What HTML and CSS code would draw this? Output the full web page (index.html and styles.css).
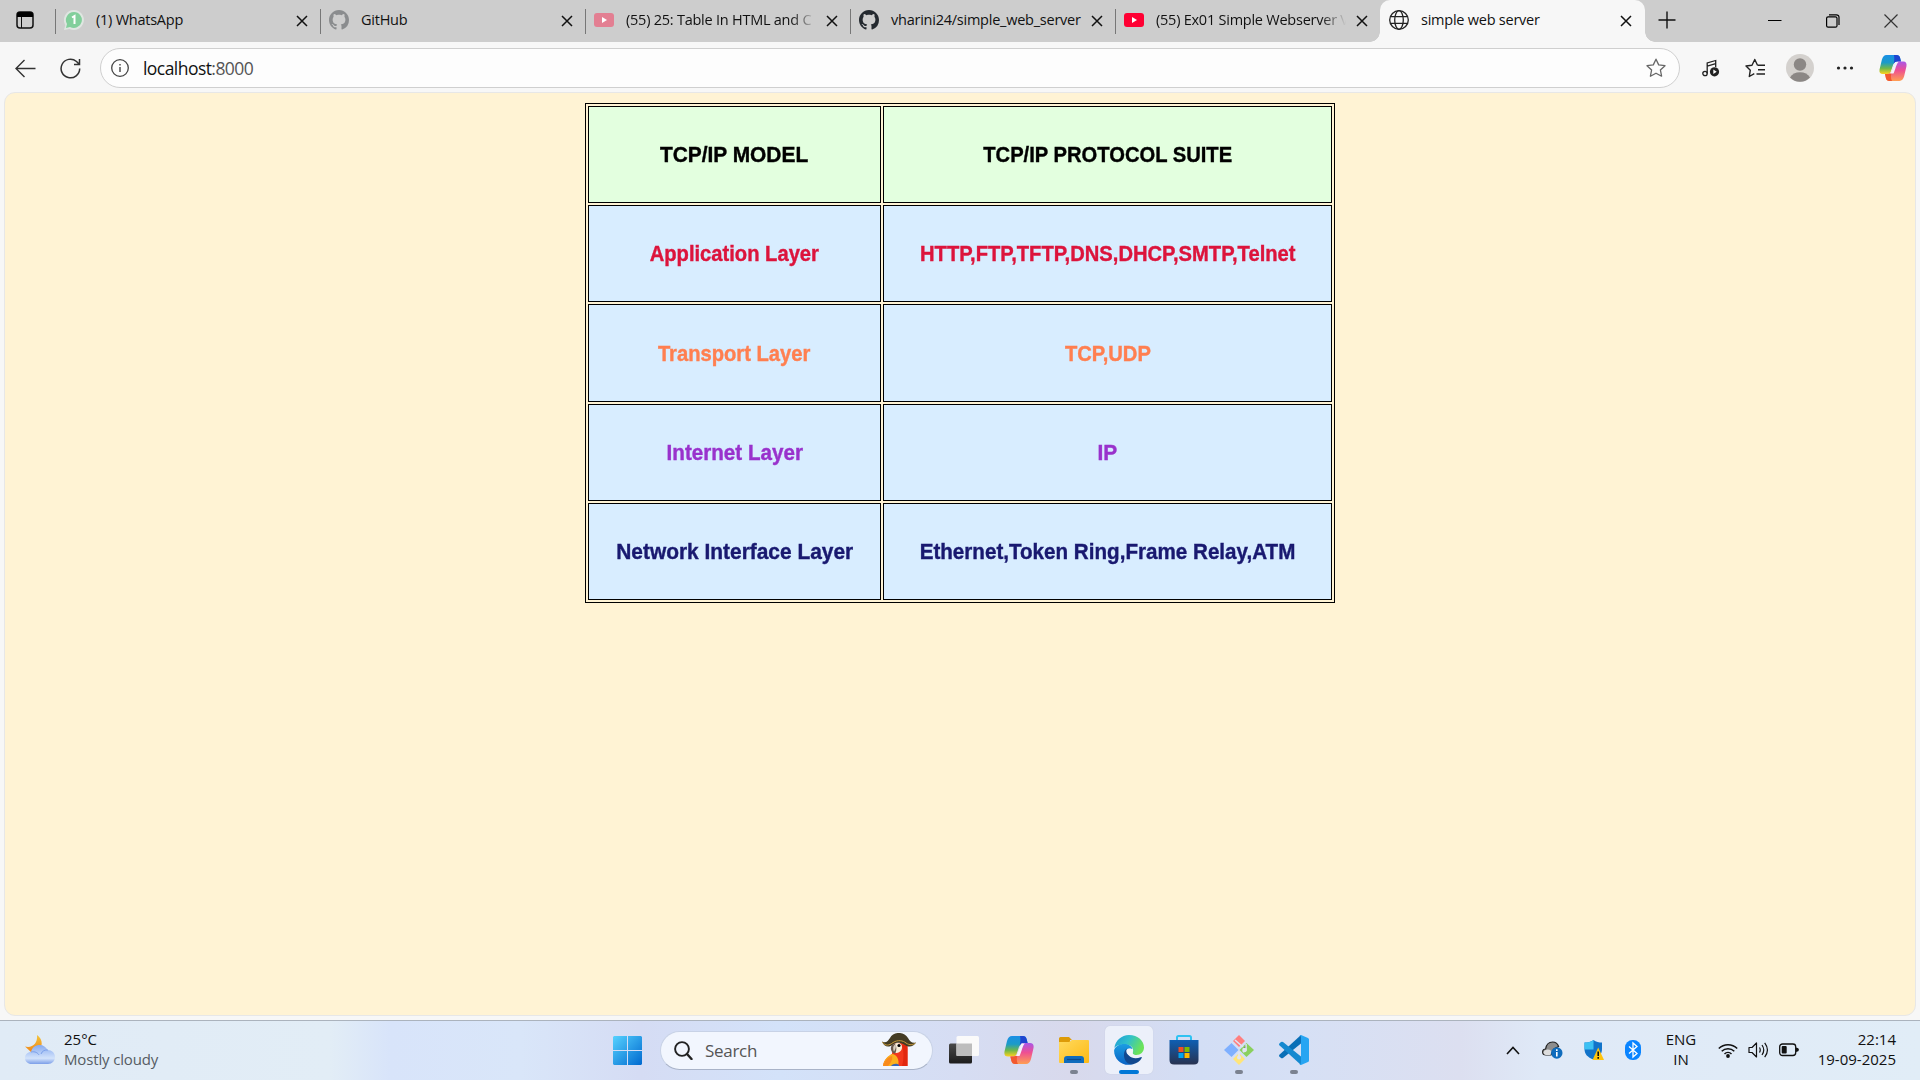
FILE: index.html
```html
<!DOCTYPE html>
<html lang="en">
<head>
<meta charset="utf-8">
<title>simple web server</title>
<link rel="stylesheet" href="styles.css">
</head>
<body>
<svg class="defs" width="0" height="0">
  <defs>
    <linearGradient id="cpA" x1="0" y1="0" x2="0" y2="1"><stop offset="0" stop-color="#1a8fe6"/><stop offset=".4" stop-color="#1b9bc8"/><stop offset=".7" stop-color="#6fb84a"/><stop offset="1" stop-color="#ffd21c"/></linearGradient>
    <linearGradient id="cpB" x1="0" y1="0" x2="0" y2="1"><stop offset="0" stop-color="#a957e8"/><stop offset=".45" stop-color="#ee4f93"/><stop offset="1" stop-color="#ff9f52"/></linearGradient>
    <linearGradient id="win" x1="0" y1="0" x2="1" y2="1"><stop offset="0" stop-color="#56d2ff"/><stop offset="1" stop-color="#0069cf"/></linearGradient>
    <linearGradient id="fold" x1="0" y1="0" x2="1" y2="1"><stop offset="0" stop-color="#ffda5e"/><stop offset="1" stop-color="#fdb913"/></linearGradient>
    <linearGradient id="edA" x1="0" y1="0" x2="1" y2=".4"><stop offset="0" stop-color="#1c9ad8"/><stop offset=".5" stop-color="#30c0cb"/><stop offset="1" stop-color="#6be35a"/></linearGradient>
    <linearGradient id="edB" x1="0" y1="0" x2="0" y2="1"><stop offset="0" stop-color="#1b9de2"/><stop offset="1" stop-color="#0a62c4"/></linearGradient>
    <linearGradient id="store" x1="0" y1="0" x2="0" y2="1"><stop offset="0" stop-color="#0f5fb3"/><stop offset="1" stop-color="#283250"/></linearGradient>
    <linearGradient id="cloud" x1="0" y1="0" x2="0" y2="1"><stop offset="0" stop-color="#86aaf0"/><stop offset=".7" stop-color="#d3e3fb"/><stop offset="1" stop-color="#7b9ee8"/></linearGradient>
    <linearGradient id="moon" x1="0" y1="0" x2="0" y2="1"><stop offset="0" stop-color="#f2c53b"/><stop offset="1" stop-color="#f0861a"/></linearGradient>
    <linearGradient id="tvA" x1="0" y1="0" x2="0" y2="1"><stop offset="0" stop-color="#4a4a4a"/><stop offset="1" stop-color="#1c1c1c"/></linearGradient>
    <symbol id="x" viewBox="0 0 12 12"><path d="M1 1l10 10M11 1L1 11" fill="none" stroke="#111" stroke-width="1.5"/></symbol>
    <symbol id="gh" viewBox="0 0 16 16"><path d="M8 0C3.58 0 0 3.58 0 8c0 3.54 2.29 6.53 5.47 7.59.4.07.55-.17.55-.38 0-.19-.01-.82-.01-1.49-2.01.37-2.53-.49-2.69-.94-.09-.23-.48-.94-.82-1.13-.28-.15-.68-.52-.01-.53.63-.01 1.08.58 1.23.82.72 1.21 1.87.87 2.33.66.07-.52.28-.87.51-1.07-1.78-.2-3.64-.89-3.64-3.95 0-.87.31-1.59.82-2.15-.08-.2-.36-1.02.08-2.12 0 0 .67-.21 2.2.82.64-.18 1.32-.27 2-.27s1.36.09 2 .27c1.53-1.04 2.2-.82 2.2-.82.44 1.1.16 1.92.08 2.12.51.56.82 1.27.82 2.15 0 3.07-1.87 3.75-3.65 3.95.29.25.54.73.54 1.48 0 1.07-.01 1.93-.01 2.2 0 .21.15.46.55.38A8.01 8.01 0 0 0 16 8c0-4.42-3.58-8-8-8z"/></symbol>
    <symbol id="yt" viewBox="0 0 20 20"><rect y="3" width="20" height="14" rx="3" fill="currentColor"/><path d="M8 7v6l5-3z" fill="#fff"/></symbol>
    <symbol id="copilot" viewBox="0 0 30 28">
      <path d="M8 0h11c2 0 3 1 3.600 3l1 4h-4c-3 0-4 2-5 5l-2 6c-1 2-2 2.500-4 2.500H4C1 20.500 0 18.500.5 15.500L3 5C4 1.800 5.500 0 8 0z" fill="url(#cpA)"/>
      <path d="M16 0h3c2 0 3 1 3.600 3l1 4h-4c-2 0-3 1-4 3 1-4 1-8 .4-10z" fill="#1f45d0"/>
      <path d="M22 28H11c-2 0-3-1-3.600-3l-1-4.500h3c3 0 4-2 5-5l2.500-6C18 7.500 19 7 21 7h5c3 0 4 2 3.500 5L27 23c-1 3.200-2.500 5-5 5z" fill="url(#cpB)"/>
      <path d="M14 28h-3c-2 0-3-1-3.600-3l-1-4.500h3c2 0 3-1 4.500-3-1.500 4-1.500 8 .1 10.500z" fill="#f2592f"/>
      <path d="M17.500 7.500h3.500c-2.500 1.500-3.500 9-5.500 12.500h-4c2-1 4-9 6-12.500z" fill="#f4f2fb"/>
    </symbol>
  </defs>
</svg>

<header class="tabs">
  <div class="tab-actions"><svg width="18" height="18" viewBox="0 0 18 18"><rect x="1" y="1" width="16" height="16" rx="3" fill="none" stroke="#111" stroke-width="1.500"/><path d="M1 6V4a3 3 0 0 1 3-3h10a3 3 0 0 1 3 3v2z" fill="#000"/><path d="M5.500 6v11" stroke="#111"/></svg></div>
  <div class="tab">
    <svg class="fav" viewBox="0 0 20 20"><path d="M10 0a10 10 0 1 1-4.500 19L0 20l1.300-5A10 10 0 0 1 10 0z" fill="#dfe6e1"/><path d="M10 2a8 8 0 1 1-4 15l-4 1 1-4a8 8 0 0 1 7-12z" fill="#82cf9b"/><path d="M8 7.500L10.500 6v8" fill="none" stroke="#fff" stroke-width="2"/></svg>
    <span class="title">(1) WhatsApp</span><svg class="close"><use href="#x"/></svg>
  </div>
  <div class="tab"><svg class="fav dim"><use href="#gh"/></svg><span class="title">GitHub</span><svg class="close"><use href="#x"/></svg></div>
  <div class="tab"><svg class="fav yt-dim"><use href="#yt"/></svg><span class="title fade">(55) 25: Table In HTML and C</span><svg class="close"><use href="#x"/></svg></div>
  <div class="tab"><svg class="fav ink"><use href="#gh"/></svg><span class="title">vharini24/simple_web_server</span><svg class="close"><use href="#x"/></svg></div>
  <div class="tab"><svg class="fav yt"><use href="#yt"/></svg><span class="title fade">(55) Ex01 Simple Webserver V</span><svg class="close"><use href="#x"/></svg></div>
  <div class="tab active"><svg class="fav" viewBox="0 0 20 20"><g fill="none" stroke="#222" stroke-width="1.300"><circle cx="10" cy="10" r="9.300"/><ellipse cx="10" cy="10" rx="4.300" ry="9.300"/><path d="M1.500 6.700h17M1.500 13.300h17"/></g></svg><span class="title">simple web server</span><svg class="close"><use href="#x"/></svg></div>
  <svg class="plus" width="18" height="18" viewBox="0 0 18 18"><path d="M9 .5v17M.5 9h17" stroke="#111" stroke-width="1.400"/></svg>
  <div class="winctl">
    <svg width="14" height="14"><path d="M0 6.500h13.500" stroke="#000"/></svg>
    <svg width="14" height="14"><g fill="none" stroke="#000" stroke-width="1.200"><rect x=".6" y="2.800" width="10.400" height="10.400" rx="1.500"/><path d="M3 .8h7.500a2.500 2.500 0 0 1 2.500 2.500V11"/></g></svg>
    <svg width="14" height="14"><path d="M.5.5l13 13M13.500.5l-13 13" stroke="#333" stroke-width="1.200"/></svg>
  </div>
</header>

<nav class="toolbar">
  <svg class="back" width="21" height="19" viewBox="0 0 21 19"><path d="M20.500 9.500H1M9.500 1L1 9.500 9.500 18" fill="none" stroke="#333" stroke-width="1.400"/></svg>
  <svg class="reload" width="21" height="21" viewBox="0 0 21 21"><path d="M19.700 10.500A9.300 9.300 0 1 1 16.500 3.500l2.800 2.700M19.500 1v5.500H14" fill="none" stroke="#333" stroke-width="1.500"/></svg>
  <div class="address">
    <svg width="18" height="18" viewBox="0 0 18 18"><circle cx="9" cy="9" r="8.300" fill="none" stroke="#444" stroke-width="1.300"/><path d="M9 8v5M9 5v1.500" stroke="#444" stroke-width="1.400"/></svg>
    <span class="url">localhost<span class="port">:8000</span></span>
    <svg class="star" width="20" height="20" viewBox="0 0 20 20"><path d="M10 1.200l2.700 5.700 6.300.8-4.600 4.300 1.200 6.200L10 15.200l-5.600 3 1.200-6.200L1 7.700l6.300-.8z" fill="none" stroke="#666" stroke-width="1.300" stroke-linejoin="round"/></svg>
  </div>
  <div class="tools">
    <svg class="media" width="18" height="19" viewBox="0 0 18 19"><g fill="none" stroke="#222" stroke-width="1.300"><circle cx="3" cy="14.500" r="2.200"/><path d="M5.200 14.500V4l8.500-2.500V8M5.200 7.200l8.500-2.500"/></g><circle cx="12.500" cy="12.800" r="4.600" fill="#222"/><path d="M11.300 10.600v4.400l3.400-2.200z" fill="#fff"/></svg>
    <svg class="favorites" width="21" height="20" viewBox="0 0 21 20"><path d="M12.500 7.200L9.800 1.500 7 7.200l-6 .8 4.300 4.200-1 6.300 5-2.800M12.500 7.200H20M13 11.800h7M11.500 16h8.500" fill="none" stroke="#222" stroke-width="1.400" stroke-linejoin="round"/></svg>
    <svg class="avatar" width="28" height="28" viewBox="0 0 28 28"><circle cx="14" cy="14" r="14" fill="#d4d1ce"/><circle cx="14" cy="10.500" r="6.200" fill="#8b8785"/><path d="M4 23.500C6 20 9.500 18.200 14 18.200s8 1.800 10 5.300a14 14 0 0 1-20 0z" fill="#8b8785"/></svg>
    <svg class="more" width="18" height="4" viewBox="0 0 18 4"><g fill="#222"><circle cx="2.500" cy="2" r="1.600"/><circle cx="9" cy="2" r="1.600"/><circle cx="15.500" cy="2" r="1.600"/></g></svg>
    <svg width="28" height="26"><use href="#copilot"/></svg>
  </div>
</nav>

<div class="frame">
<main class="page">
  <table>
    <tr><th><span class="wider">TCP/IP MODEL</span></th><th><span>TCP/IP PROTOCOL SUITE</span></th></tr>
    <tr class="application"><td><span>Application Layer</span></td><td><span>HTTP,FTP,TFTP,DNS,DHCP,SMTP,Telnet</span></td></tr>
    <tr class="transport"><td><span>Transport Layer</span></td><td><span>TCP,UDP</span></td></tr>
    <tr class="internet"><td><span class="wide">Internet Layer</span></td><td><span class="wider">IP</span></td></tr>
    <tr class="network"><td><span class="wider">Network Interface Layer</span></td><td><span class="wide">Ethernet,Token Ring,Frame Relay,ATM</span></td></tr>
  </table>
</main>
</div>

<footer class="taskbar">
  <div class="weather">
    <svg width="30" height="30" viewBox="0 0 30 30"><path d="M12 0c6 4 7 13-1 17H6L0 11.500c7 2 13-3 12-11.500z" fill="url(#moon)"/><path d="M6.500 29C3 29 0 26.500 0 23s2.500-6 6-6c1-4.500 4.500-7 8.500-7 4 0 6.500 2 8 5 4.500 0 7.500 3 7.500 7s-3 7-7 7z" fill="url(#cloud)"/><path d="M6 17c4-1 7 1 8 3M16 19c1-3 4-4.500 7-4" stroke="#7ba0ea" stroke-width="1" fill="none"/></svg>
    <div class="lines"><span>25°C</span><span class="grey">Mostly cloudy</span></div>
  </div>
  <div class="apps">
    <svg class="start" width="29" height="29" viewBox="0 0 29 29"><path d="M1 0h13v14H0V1zM15 0h13l1 1v13H15zM0 15h14v14H1l-1-1zM15 15h14v13l-1 1H15z" fill="url(#win)"/></svg>
    <div class="search">
      <svg width="19" height="19" viewBox="0 0 19 19"><circle cx="8" cy="8" r="6.900" fill="none" stroke="#222" stroke-width="1.900"/><path d="M13 13l4.500 5" stroke="#222" stroke-width="2.400" stroke-linecap="round"/></svg>
      <span>Search</span>
      <svg class="parrot" width="34" height="34" viewBox="0 0 34 34"><path d="M11 10h11c3 0 3.500 3 3.500 6v17H1c1-7 5-9 9-12z" fill="#f2381c"/><path d="M1 33c1-7 5-10 9-12 4 0 8 5 6 12z" fill="#fbb01d"/><path d="M1 33c2-6 5-9 9-10 1 3-1 7-4 10z" fill="#f98a1c"/><path d="M9 33c2-2.500 6-3 8-1v1z" fill="#3766b5"/><path d="M20 12l5.500-1v22H20c2-7 2-14 0-21z" fill="#e2280f"/><path d="M11 11c5-2 9-1 9 3s-3 6-7 6z" fill="#f9efda"/><path d="M13 11c-4 0-5 4-3.500 7 1 2 2.500 3 4 2 1-3 1.500-6-.5-9z" fill="#6b5a4c"/><path d="M13.500 11.500c-2.500 1-3 4-1.500 7 1.500-2 2.500-5 1.500-7z" fill="#d9cfc0"/><circle cx="17" cy="12.500" r="1.600" fill="#000"/><path d="M0 8.500c4 2 6-.5 8-3.500 3-6.500 14-7 18 0 2 3.500 4 5.500 8 4.500-3 5-8 5-12 2-4-2.500-8-2.500-11 0C7 15 2 14 0 8.500z" fill="#443c24"/><path d="M.5 9c3 4.500 6.500 3.500 10.500.5 5-3 10-2 13 .5 4 2.500 6.500 2 9.500 0" stroke="#c79a3a" stroke-width="1" fill="none"/></svg>
    </div>
    <div class="app"><svg width="30" height="28" viewBox="0 0 30 28"><rect y="7.500" width="23" height="20" rx="1.500" fill="url(#tvA)"/><rect x="7.500" width="22.500" height="20" rx="1.500" fill="#fafafa"/><rect x="7.500" y="7.500" width="15.500" height="12.500" fill="#bdbdbd"/></svg></div>
    <div class="app"><svg width="30" height="28"><use href="#copilot"/></svg></div>
    <div class="app run"><svg width="30" height="26" viewBox="0 0 30 26"><path d="M0 1.500Q0 0 1.500 0H10l3 3h-2v5H0z" fill="#dd9b08"/><path d="M0 5h10l3-2h16q1 0 1 1v21q0 1-1 1H1q-1 0-1-1z" fill="url(#fold)"/><path d="M5 26v-4q0-3 3-3h14q3 0 3 3v4z" fill="#0f6cbd"/><path d="M8 22.500h14" stroke="#0a4a8c" stroke-width="1.200"/></svg></div>
    <div class="app current"><svg width="30" height="30" viewBox="0 0 30 30"><path d="M.3 13C1.500 5.500 7.500 0 15 0c9 0 15 6 15 12.500 0 4.500-3.500 7.500-7.500 7.500-3.500 0-4.500-1-3.500-3 1-4-2-7.500-8-7.500C6 9.500 2 10.500.3 13z" fill="url(#edA)"/><path d="M.1 15.500C1 11.500 5 9 10.500 9c3.500 0 7 1.500 8 5-5-1.500-8.500 2.500-7.500 7.500.8 4 4 7.200 8 7.700C9 32 0 25 .1 15.500z" fill="url(#edB)"/><path d="M12.700 13.500C7.500 18 10 30 19 29.200c4-.7 7-3.200 8.700-6.200.3-.8-.3-1.200-1-.8C19 25.500 12 21 12.700 13.500z" fill="#11488f"/><path d="M12.500 15c1.500-2 5-2 6 .2.600 1.500-.7 2 .3 3.600.6 1 1.600 1.200 3.200 1.200-5 2-10.500 0-9.500-5z" fill="#f0f4fb"/></svg></div>
    <div class="app"><svg width="30" height="30" viewBox="0 0 30 30"><path d="M8 6V2.500Q8 1 9.500 1h11Q22 1 22 2.500V6" fill="none" stroke="#2fc2f2" stroke-width="2"/><path d="M.5 5h29v20q0 4.500-4.500 4.500H5Q.5 29.500.5 25z" fill="url(#store)"/><path d="M9.500 12h5v5h-5z" fill="#f25022"/><path d="M15.500 12h5v5h-5z" fill="#7fba00"/><path d="M9.500 18h5v5h-5z" fill="#00a4ef"/><path d="M15.500 18h5v5h-5z" fill="#ffb900"/></svg></div>
    <div class="app run"><svg width="30" height="30" viewBox="0 0 30 30"><path d="M15 0l6 6-6 6-6-6z" fill="#ff7f7f"/><path d="M7.500 8l7 7-7 7L0 15z" fill="#7fb0ff"/><path d="M22.500 8l7.500 7-7.500 7-7-7z" fill="#8ad05e"/><path d="M15 18l6 6-6 6-6-6z" fill="#ffe57a"/><path d="M11 5l8 7M22 9v6l-3 2M15 17v6" stroke="#dfe4f5" stroke-width="1.600"/><circle cx="20.500" cy="15" r="2.300" fill="#dfe4f5"/><circle cx="15" cy="22.500" r="2" fill="#dfe4f5"/></svg></div>
    <div class="app run"><svg width="30" height="30" viewBox="0 0 30 30"><path d="M22 0v8.500L4 23q-1 .6-2 0L.4 21.500q-.7-1 0-1.800z" fill="#0a6fb7"/><path d="M22 30v-8.500L4 7q-1-.6-2 0L.4 8.500q-.7 1 0 1.800z" fill="#1489d0"/><path d="M22 0l7 3q1 .5 1 1.500v21q0 1-1 1.500l-7 3q-1 0-1.500-.5 1.500 0 1.500-2V2.500q0-2-1.500-2Q21 0 22 0z" fill="#27a5f2"/></svg></div>
  </div>
  <div class="tray">
    <svg class="chev" width="14" height="9"><path d="M1 8l6-6.500L13 8" fill="none" stroke="#111" stroke-width="1.600"/></svg>
    <svg class="onedrive" width="21" height="18" viewBox="0 0 21 18"><path d="M4 14C1.500 14 .6 12.500.6 11c0-2 1.400-3 3-3 .6-4 3-7 7-7 3 0 5 1.500 6 4.500L12 8l-3 6z" fill="#8d8d8d" stroke="#222" stroke-width="1.200"/><path d="M1.500 11c2-3 5-3 8-1l-1 4H4c-1.500 0-2.500-1-2.500-3z" fill="#ddd"/><circle cx="14.800" cy="12" r="5.700" fill="#0f6cbd"/><path d="M14.800 11v4.500M14.800 8.300v1.600" stroke="#fff" stroke-width="1.600"/></svg>
    <svg class="shield" width="20" height="21" viewBox="0 0 20 21"><path d="M9.500 0C12 2 15 2.500 18 2.500V9c0 5-3 8.500-8.500 10.500C3.500 17.500.5 14 .5 9V2.500C4 2.500 7 2 9.500 0z" fill="#1273c9"/><path d="M9.500 0v9.500h-9v-7C4 2.500 7 2 9.500 0z" fill="#3cc1f3"/><path d="M14.200 7.500L20 20H8.500z" fill="#ffc40d"/><path d="M14.200 11.500v4.500M14.200 17v1.700" stroke="#111" stroke-width="1.600"/></svg>
    <svg class="bt" width="16" height="20" viewBox="0 0 16 20"><rect width="16" height="20" rx="7.500" fill="#0a84ff"/><path d="M4 6.500l8 7L8 17V3l4 3.500-8 7" fill="none" stroke="#fff" stroke-width="1.300"/></svg>
    <div class="lines lang"><span>ENG</span><span>IN</span></div>
    <div class="status">
      <svg width="20" height="16" viewBox="0 0 20 16"><g fill="none" stroke="#111" stroke-width="1.500"><path d="M.8 6.500a13 13 0 0 1 18.400 0M3.700 9.300a9 9 0 0 1 12.600 0M6.500 12a5 5 0 0 1 7 0"/></g><circle cx="10" cy="14" r="1.900" fill="#111"/></svg>
      <svg width="21" height="18" viewBox="0 0 21 18"><g fill="none" stroke="#111" stroke-width="1.200"><path d="M1 6.500h3l4.500-4.500v14L4 11.500H1z" stroke-linejoin="round"/><path d="M11.500 6.500q1.500 2.500 0 5M14 4q3.500 5 0 10M16.700 1.800q5.500 7.200 0 14.400"/></g></svg>
      <svg width="20" height="14" viewBox="0 0 20 14"><rect x=".7" y="1" width="16" height="11.500" rx="2.800" fill="none" stroke="#111" stroke-width="1.300"/><rect x="2.700" y="3" width="5" height="7.500" rx="1" fill="#111"/><path d="M17 4.500q3 .5 3 2.300T17 9z" fill="#111"/></svg>
    </div>
    <div class="lines clock"><span>22:14</span><span>19-09-2025</span></div>
  </div>
</footer>
</body>
</html>
```
FILE: styles.css
```css
* { box-sizing: border-box; }
body { margin: 0; width: 1920px; height: 1080px; overflow: hidden; display: flex; flex-direction: column; background: #f7f7f7; font-family: "Open Sans", "Noto Sans", sans-serif; color: #111; }
svg { display: block; flex: none; }
.defs { position: absolute; }

/* Tab strip */
.tabs { height: 42px; flex: none; display: flex; background: #cdcdcd; }
.tab-actions { width: 55px; padding: 11px 0 0 16px; }
.tab { width: 265px; height: 42px; display: flex; align-items: center; padding: 0 12px 3px 9px; position: relative; }
.tab::before { content: ""; position: absolute; left: 0; top: 9px; width: 1px; height: 25px; background: #777; }
.tab .fav { width: 20px; height: 20px; margin-right: 12px; }
.tab .title { flex: none; width: 192px; font-size: 14.5px; letter-spacing: -.24px; white-space: nowrap; }
.tab .fade { -webkit-mask-image: linear-gradient(90deg, #000 165px, transparent 190px); mask-image: linear-gradient(90deg, #000 165px, transparent 190px); }
.tab .close { width: 12px; height: 12px; margin-left: 8px; margin-top: 3px; }
.dim { fill: #8a8c8e; }
.ink { fill: #24292f; }
.yt { color: #ff0033; }
.yt-dim { color: #e37f92; }
.tab.active { background: #f7f7f7; border-radius: 10px 10px 0 0; }
.tab.active .close { margin-left: 7px; }
.tab.active::before { left: -10px; top: 32px; width: 10px; height: 10px; background: radial-gradient(circle at 0 0, transparent 9.500px, #f7f7f7 10px); }
.tab.active::after { content: ""; position: absolute; right: -10px; top: 32px; width: 10px; height: 10px; background: radial-gradient(circle at 100% 0, transparent 9.500px, #f7f7f7 10px); }
.plus { margin: 11px 0 0 13px; }
.winctl { display: flex; gap: 44px; margin-left: auto; padding: 14px 22px 0 0; }

/* Address row */
.toolbar { height: 50px; flex: none; display: flex; align-items: center; padding: 2px 13px 0 15px; }
.back { margin-right: 24px; }
.reload { margin-right: 19px; }
.address { width: 1580px; height: 40px; display: flex; align-items: center; padding: 0 13px 0 10px; background: #fdfdfd; border: 1px solid #cfcfcf; border-radius: 20px; }
.url { margin-left: 14px; font-size: 17.500px; letter-spacing: -.55px; }
.port { color: #555; }
.star { margin-left: auto; }
.tools { flex: 1; display: flex; align-items: center; padding-left: 22px; }
.media { margin-right: 25px; }
.favorites { margin-right: 20px; }
.avatar { margin-right: 22px; }
.more { margin-right: 25px; }

/* Page */
.frame { flex: none; height: 929px; padding: 0 4px 4px; border-bottom: 1px solid #abb3bd; }
.page { height: 924px; background: #fff3d4; border: 1px solid #e7e7e7; border-radius: 11px; padding-top: 10px; }
table { width: 750px; height: 500px; margin: 0 auto; border: 1px solid #000; border-spacing: 2px; table-layout: fixed; font: bold 22px "Liberation Sans", Arial, sans-serif; text-align: center; color: #000; }
th, td { border: 1px solid #000; padding: 1px 0 0; height: 97px; background: #d8edff; white-space: nowrap; }
th { background: #e3ffdf; }
th:first-child, td:first-child { width: 293px; }
.transport td { height: 98px; }
table span { display: inline-block; transform: scaleX(.917); -webkit-text-stroke: .4px currentColor; }
table .wide { transform: scaleX(.937); }
table .wider { transform: scaleX(.95); }
.application { color: crimson; }
.transport { color: coral; }
.internet { color: darkorchid; }
.network { color: midnightblue; }

/* Taskbar */
.taskbar { flex: 1; display: flex; align-items: center; padding-bottom: 1px; background: linear-gradient(90deg, #e0ebf6 0, #e2edf6 330px, #d8e4fa 390px, #d9e6f9 520px, #d5dcf4 640px, #d3e2f9 780px, #d6ddf3 960px, #d8d9ec 1070px, #d3def5 1200px, #d6e0f5 1300px, #dcdff0 1460px, #dfe9f7 1540px, #e1edf7 1920px); font-size: 15px; }
.weather { width: 613px; display: flex; padding-left: 25px; gap: 9px; align-items: center; }
.lines { display: flex; flex-direction: column; align-items: flex-start; line-height: 20px; margin-top: -2px; }
.grey { color: #565c63; letter-spacing: -.15px; }
.apps { display: flex; align-items: center; }
.start { margin-right: 18px; }
.search { width: 273px; height: 39px; margin-right: 7px; display: flex; align-items: center; padding: 0 16px 0 13px; background: #f2f6fe; border: 1px solid #c8d2e6; border-bottom-color: #a9b3c8; border-radius: 20px; font-size: 17px; letter-spacing: -.3px; color: #555; }
.search span { margin-left: 12px; }
.parrot { margin-left: auto; }
.app { width: 48px; height: 48px; margin-right: 7px; display: flex; align-items: center; justify-content: center; position: relative; border-radius: 5px; }
.current { background: #ecf0fa; box-shadow: 0 0 1px #b8c0d4; }
.run::after, .current::after { content: ""; position: absolute; bottom: 0; left: 20px; width: 8px; height: 4px; border-radius: 2px; background: #7b8290; }
.current::after { left: 14px; width: 20px; background: #0078d7; }
.tray { margin-left: auto; display: flex; align-items: center; padding-right: 24px; }
.onedrive { margin-left: 22px; }
.shield { margin-left: 21px; }
.bt { margin-left: 21px; }
.lang { width: 40px; margin-left: 20px; align-items: center; }
.status { margin-left: 17px; display: flex; align-items: center; gap: 10px; }
.clock { width: 97px; align-items: flex-end; }
```
